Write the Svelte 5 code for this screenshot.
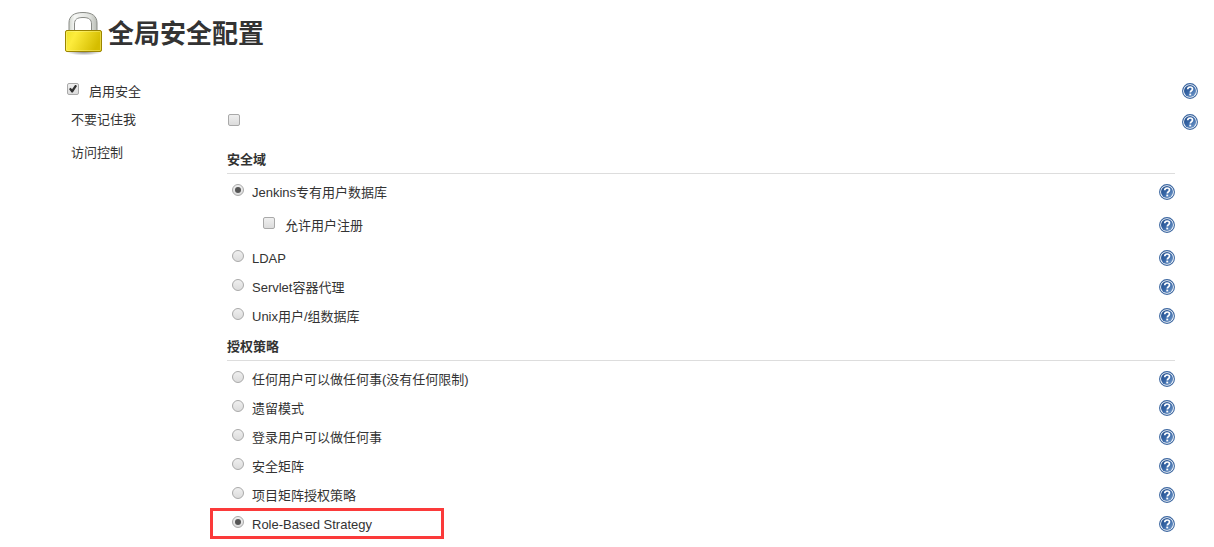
<script lang="ts">
  type Option = { value: string; label: string };

  const realms: Option[] = [
    { value: 'local', label: 'Jenkins专有用户数据库' },
    { value: 'ldap', label: 'LDAP' },
    { value: 'container', label: 'Servlet容器代理' },
    { value: 'unix', label: 'Unix用户/组数据库' },
  ];

  const strategies: Option[] = [
    { value: 'unsecured', label: '任何用户可以做任何事(没有任何限制)' },
    { value: 'legacy', label: '遗留模式' },
    { value: 'loggedin', label: '登录用户可以做任何事' },
    { value: 'matrix', label: '安全矩阵' },
    { value: 'project', label: '项目矩阵授权策略' },
    { value: 'role', label: 'Role-Based Strategy' },
  ];

  let useSecurity = $state(true);
  let disableRememberMe = $state(false);
  let allowSignup = $state(false);
  let realm = $state('local');
  let strategy = $state('role');
</script>

{#snippet help()}
  <button type="button" class="help" aria-label="Help">
    <svg viewBox="0 0 16 16" width="16" height="16">
      <circle cx="8" cy="8" r="7.4" fill="#fff" stroke="#3b66a0" stroke-width="1.1" />
      <circle cx="8" cy="8" r="6" fill="url(#help-fill)" />
      <path
        d="M5.7 6.3C5.8 4.7 6.8 4 8.1 4c1.4 0 2.4.8 2.4 2 0 1.7-2.2 1.8-2.2 3.5"
        fill="none"
        stroke="#fff"
        stroke-width="1.7"
      />
      <rect x="7.3" y="10.6" width="1.9" height="1.8" fill="#fff" />
    </svg>
  </button>
{/snippet}

<svg class="defs" width="0" height="0" aria-hidden="true">
  <defs>
    <linearGradient id="help-fill" x1="0" y1="0" x2="1" y2="1">
      <stop offset="0" stop-color="#204a87" />
      <stop offset="0.5" stop-color="#3968a8" />
      <stop offset="1" stop-color="#7da3d0" />
    </linearGradient>
  </defs>
</svg>

<main>
  <h1>
    <svg class="lock" viewBox="0 0 40 46" width="40" height="46" aria-hidden="true">
      <defs>
        <linearGradient id="lock-body" x1="0" y1="0" x2="1" y2="0.3">
          <stop offset="0" stop-color="#ece028" />
          <stop offset="0.3" stop-color="#fdec3c" />
          <stop offset="1" stop-color="#d5bd00" />
        </linearGradient>
        <linearGradient id="lock-shackle" x1="0" y1="0" x2="1" y2="0">
          <stop offset="0" stop-color="#d3d7cf" />
          <stop offset="0.2" stop-color="#f6f7f5" />
          <stop offset="0.75" stop-color="#dfe1dd" />
          <stop offset="1" stop-color="#babdb6" />
        </linearGradient>
        <radialGradient id="lock-shadow">
          <stop offset="0" stop-color="#000" stop-opacity="0.5" />
          <stop offset="1" stop-color="#000" stop-opacity="0" />
        </radialGradient>
      </defs>
      <ellipse cx="20" cy="41.5" rx="18" ry="4" fill="url(#lock-shadow)" />
      <path
        d="M5 22V13C5 6 10 2.5 19 2.5S33 6 33 13V22H27.5V14C27.5 9.5 25 7.5 19 7.5S10.5 9.5 10.5 14V22Z"
        fill="url(#lock-shackle)"
        stroke="#888a85"
      />
      <rect x="1.5" y="20.5" width="36" height="21" rx="1.5" fill="url(#lock-body)" stroke="#9b8500" />
      <rect x="2.5" y="21.5" width="34" height="19" rx="1" fill="none" stroke="#fff9a0" stroke-opacity="0.4" />
    </svg>
    <span>全局安全配置</span>
  </h1>

  <form>
    <div class="row">
      <label class="choice enable">
        <input type="checkbox" bind:checked={useSecurity} />
        启用安全
      </label>
      {@render help()}
    </div>

    <div class="setting remember">
      <label class="name" for="remember">不要记住我</label>
      <div class="value">
        <input id="remember" type="checkbox" bind:checked={disableRememberMe} />
      </div>
      {@render help()}
    </div>

    <div class="setting">
      <div class="name">访问控制</div>
      <div class="groups">
        <section>
          <h2>安全域</h2>
          {#each realms as option}
            <div class="row">
              <label class="choice">
                <input type="radio" name="realm" value={option.value} bind:group={realm} />
                {option.label}
              </label>
              {@render help()}
            </div>
            {#if option.value === 'local' && realm === 'local'}
              <div class="row nested">
                <label class="choice">
                  <input type="checkbox" bind:checked={allowSignup} />
                  允许用户注册
                </label>
                {@render help()}
              </div>
            {/if}
          {/each}
        </section>

        <section>
          <h2>授权策略</h2>
          {#each strategies as option}
            <div class="row" class:marked={option.value === 'role'}>
              <label class="choice">
                <input type="radio" name="strategy" value={option.value} bind:group={strategy} />
                {option.label}
              </label>
              {@render help()}
            </div>
          {/each}
        </section>
      </div>
    </div>
  </form>
</main>

<style>
  :global(body) {
    background: #fff;
    color: #333;
    font-family: 'Liberation Sans', 'Noto Sans CJK SC', sans-serif;
    font-size: 13px;
    line-height: 20px;
  }

  .defs {
    position: absolute;
  }

  main {
    padding: 10px 16px 8px 64px;
  }

  h1 {
    display: flex;
    align-items: center;
    gap: 4px;
    height: 46px;
    margin: 0 0 20px;
    font-size: 26px;
    line-height: 40px;
  }

  h1 span {
    padding-top: 2px;
  }

  h2 {
    margin: 0 0 3px;
    padding-top: 2px;
    border-bottom: 1px solid #ddd;
    font-size: 13px;
    line-height: 27px;
  }

  section {
    padding-bottom: 1px;
  }

  .row {
    position: relative;
    display: flex;
    align-items: center;
    justify-content: space-between;
    height: 29px;
  }

  .choice {
    display: flex;
    align-items: center;
    gap: 8px;
    padding: 2px 0 0 5px;
  }

  .choice input {
    margin-bottom: 6px;
  }

  .enable {
    gap: 10px;
    padding-left: 3px;
  }

  .nested {
    margin: 4px 0;
    padding-left: 31px;
  }

  .nested .choice {
    gap: 10px;
  }

  .setting {
    display: grid;
    grid-template-columns: 163px 1fr auto;
  }

  .name {
    padding-left: 7px;
    line-height: 31px;
  }

  .remember {
    height: 32px;
    align-items: center;
  }

  .remember .name {
    padding-bottom: 4px;
    line-height: 27px;
  }

  .remember .help {
    margin-top: 2px;
  }

  .value {
    display: flex;
    padding: 0 1px 2px;
  }

  .groups {
    padding-top: 7px;
    margin-right: 23px;
    grid-column: 2 / 4;
  }

  input {
    appearance: none;
    position: relative;
    flex: none;
    box-sizing: border-box;
    width: 12px;
    height: 12px;
    margin: 0;
    border: 1px solid #a9a9a9;
    border-radius: 2px;
    background: linear-gradient(#efefef, #dcdcdc);
  }

  input[type='radio'] {
    border-radius: 50%;
  }

  input[type='radio']:checked::before {
    content: '';
    position: absolute;
    inset: 2px;
    border-radius: 50%;
    background: #555;
  }

  input[type='checkbox']:checked::before {
    content: '';
    position: absolute;
    inset: 1px;
    background: #333;
    clip-path: polygon(0 56%, 20% 42%, 38% 58%, 80% 0, 100% 18%, 48% 100%, 32% 100%);
  }

  .help {
    display: block;
    width: 16px;
    height: 16px;
    padding: 0;
    border: 0;
    background: none;
    cursor: pointer;
  }

  .help svg {
    display: block;
  }

  .marked::after {
    content: '';
    position: absolute;
    top: -1px;
    left: -17px;
    box-sizing: border-box;
    width: 234px;
    height: 31px;
    border: 3px solid #fb3a3a;
    pointer-events: none;
  }
</style>
